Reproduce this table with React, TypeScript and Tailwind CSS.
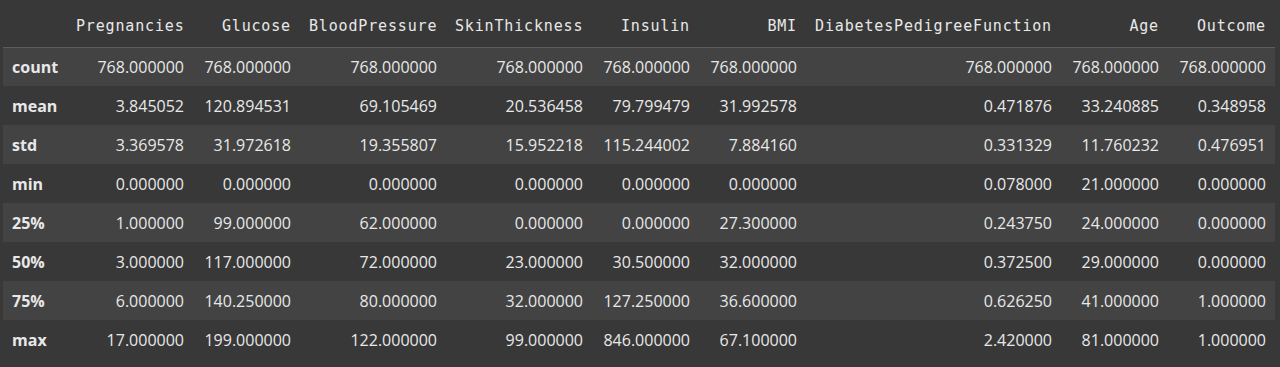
import React from "react";

const columns: { name: string; width: string }[] = [
  { name: "Pregnancies", width: "w-[126px]" },
  { name: "Glucose", width: "w-[107px]" },
  { name: "BloodPressure", width: "w-[146px]" },
  { name: "SkinThickness", width: "w-[146px]" },
  { name: "Insulin", width: "w-[107px]" },
  { name: "BMI", width: "w-[107px]" },
  { name: "DiabetesPedigreeFunction", width: "w-[255px]" },
  { name: "Age", width: "w-[107px]" },
  { name: "Outcome", width: "w-[107px]" },
];

const rows: [string, string[]][] = [
  ["count", ["768.000000", "768.000000", "768.000000", "768.000000", "768.000000", "768.000000", "768.000000", "768.000000", "768.000000"]],
  ["mean", ["3.845052", "120.894531", "69.105469", "20.536458", "79.799479", "31.992578", "0.471876", "33.240885", "0.348958"]],
  ["std", ["3.369578", "31.972618", "19.355807", "15.952218", "115.244002", "7.884160", "0.331329", "11.760232", "0.476951"]],
  ["min", ["0.000000", "0.000000", "0.000000", "0.000000", "0.000000", "0.000000", "0.078000", "21.000000", "0.000000"]],
  ["25%", ["1.000000", "99.000000", "62.000000", "0.000000", "0.000000", "27.300000", "0.243750", "24.000000", "0.000000"]],
  ["50%", ["3.000000", "117.000000", "72.000000", "23.000000", "30.500000", "32.000000", "0.372500", "29.000000", "0.000000"]],
  ["75%", ["6.000000", "140.250000", "80.000000", "32.000000", "127.250000", "36.600000", "0.626250", "41.000000", "1.000000"]],
  ["max", ["17.000000", "199.000000", "122.000000", "99.000000", "846.000000", "67.100000", "2.420000", "81.000000", "1.000000"]],
];

const App: React.FC = () => {
  return (
    <div className="w-[1280px] h-[367px] bg-[#383838] pl-[3px] overflow-hidden">
      <table className="table-fixed border-collapse w-[1272px] text-[#e8e8e8]">
        <thead>
          <tr className="h-[47px] border-b border-[#5c5c5c]">
            <th className="w-[64px]"></th>
            {columns.map((col) => (
              <th
                key={col.name}
                className={`${col.width} px-[9px] pt-[6px] text-right font-normal text-[15px] tracking-[0.84px] whitespace-nowrap`}
                style={{ fontFamily: '"DejaVu Sans Mono", monospace' }}
              >
                {col.name}
              </th>
            ))}
          </tr>
        </thead>
        <tbody className="font-['Open_Sans',sans-serif] text-[16px]">
          {rows.map(([label, values], i) => (
            <tr
              key={label}
              className={i % 2 === 0 ? "h-[39px] bg-[#434343]" : "h-[39px]"}
            >
              <th className="px-[9px] text-left font-bold">{label}</th>
              {values.map((v, j) => (
                <td key={j} className="px-[9px] text-right whitespace-nowrap">
                  {v}
                </td>
              ))}
            </tr>
          ))}
        </tbody>
      </table>
    </div>
  );
};

export default App;
